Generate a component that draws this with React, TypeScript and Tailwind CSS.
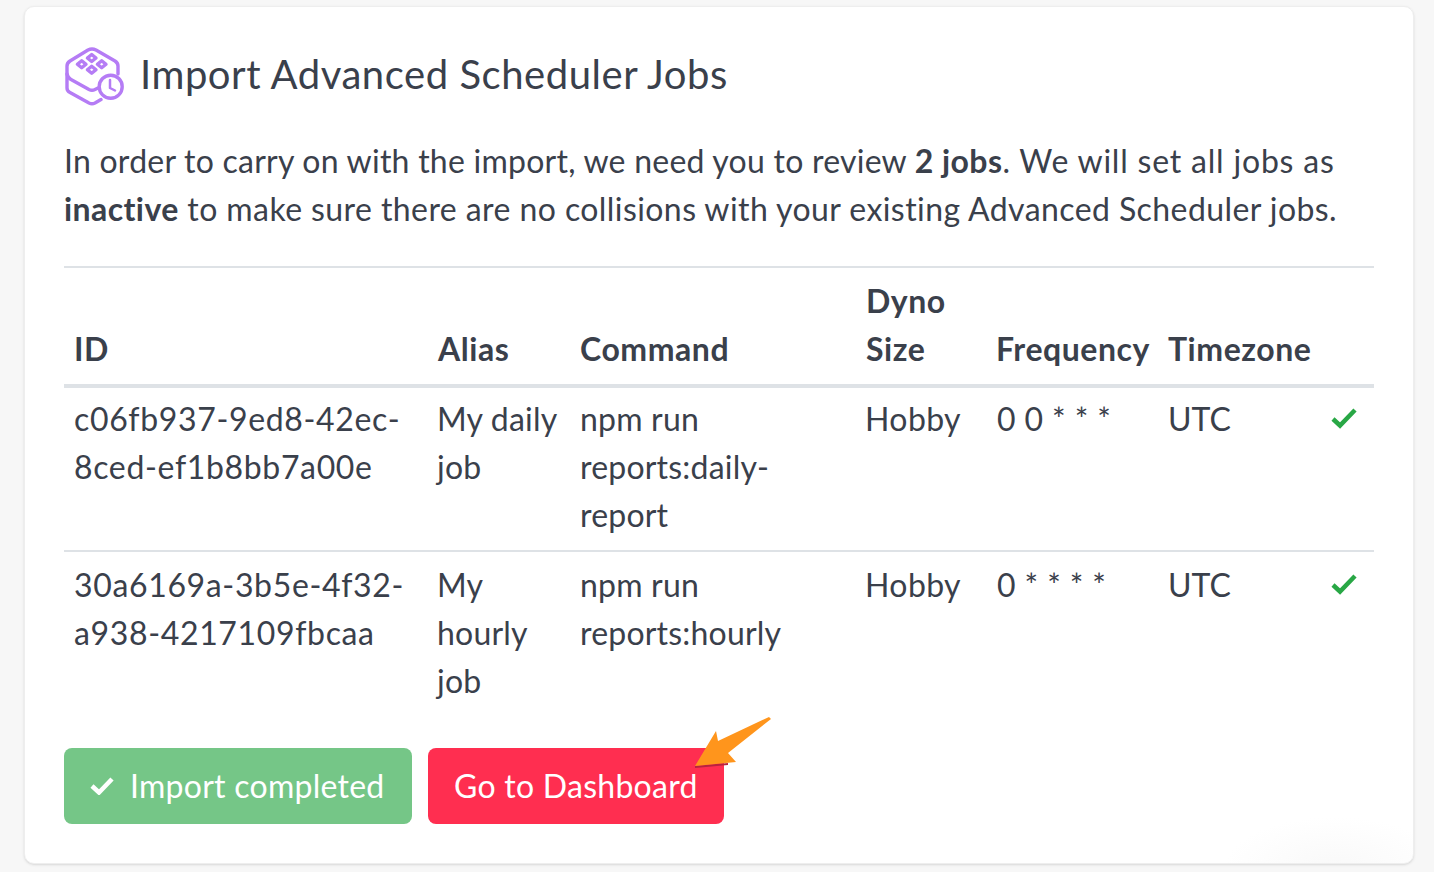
const font = "font-['Lato','Noto_Sans',sans-serif]";

type Job = {
  id: string[];
  alias: string[];
  command: string[];
  size: string;
  frequency: string;
  timezone: string;
};

const JOBS: Job[] = [
  {
    id: ["c06fb937-9ed8-42ec-", "8ced-ef1b8bb7a00e"],
    alias: ["My daily", "job"],
    command: ["npm run", "reports:daily-", "report"],
    size: "Hobby",
    frequency: "0 0 * * *",
    timezone: "UTC",
  },
  {
    id: ["30a6169a-3b5e-4f32-", "a938-4217109fbcaa"],
    alias: ["My", "hourly", "job"],
    command: ["npm run", "reports:hourly"],
    size: "Hobby",
    frequency: "0 * * * *",
    timezone: "UTC",
  },
];

function Logo() {
  return (
    <svg viewBox="64 46 60 60" className="w-[60px] h-[60px] shrink-0" fill="none" stroke="#b57cf5" strokeWidth="3.4" strokeLinejoin="round" strokeLinecap="round">
      <path d="M88 50 Q92 48 96 50 L115 61 Q118 63 118 66 L118 74 M67 66 Q67 63 70 61 L88 50 M67 66 L67 88 Q67 91 70 92.5 L89 103 Q92 104.5 95 103 L101 99.5" />
      <path d="M67 74 Q68 78 71 79.5 L89 89.5 Q92 91 95 89.5 L98 88" />
      <path d="M91.7 54.5 L96 58 L91.7 61.5 L87.4 58 Z" />
      <path d="M81.7 60.8 L86 64.3 L81.7 67.8 L77.4 64.3 Z" />
      <path d="M101.7 60.8 L106 64.3 L101.7 67.8 L97.4 64.3 Z" />
      <path d="M91.7 66.3 L96 69.8 L91.7 73.3 L87.4 69.8 Z" />
      <circle cx="110.7" cy="86.7" r="11.5" fill="#fff" />
      <path d="M110 80 L110 88 L115 90.5" strokeWidth="2.5" />
    </svg>
  );
}

function Check() {
  return (
    <svg viewBox="0 0 26 24" className="w-[26px] h-[24px]" fill="none" stroke="#28a745" strokeWidth="4.5">
      <path d="M2 12 L9 18.5 L24 3" />
    </svg>
  );
}

function Lines({ lines, className }: { lines: string[]; className?: string }) {
  return (
    <>
      {lines.map((line) => (
        <div key={line} className={`whitespace-nowrap ${className ?? ""}`}>
          {line}
        </div>
      ))}
    </>
  );
}

export default function App() {
  const td = "align-top pb-[11px] pl-[9px] pr-[10px]";
  const th = "align-bottom text-left font-bold tracking-[0.55px] pt-[9px] pb-[11px] pl-[9px] pr-[0px] border-b-4 border-[#dee2e6]";

  return (
    <div className={`${font} w-[1434px] h-[872px] overflow-hidden bg-[#f7f7f7] pt-[6px] pl-[24px] pr-[20px] text-[32px] leading-[48px] text-[#3a404b]`}>
      <div className="h-[858px] bg-white bg-[radial-gradient(ellipse_110px_50px_at_1310px_860px,#f9f9f9,#ffffff)] rounded-[10px] border border-[#eeeeee] shadow-sm pl-[39px] pr-[39px] pt-[37px]">
        <div className="flex items-center gap-[16px] h-[60px] relative">
          <div className="w-[60px] h-[60px] mt-[4px] shrink-0">
            <Logo />
          </div>
          <h1 className="text-[40px] leading-[48px] font-normal tracking-[0.55px]">Import Advanced Scheduler Jobs</h1>
        </div>
        <p className="mt-[33px] tracking-[0.42px]">
          <span className="tracking-[0.24px]">In order to carry on with the import, we need you to review </span>
          <b>2 jobs</b>
          <span className="tracking-[0.8px]">. We will set all jobs as</span>
          <br />
          <b>inactive</b> to make sure there are no collisions with your existing Advanced Scheduler jobs.
        </p>
        <table className="mt-[33px] w-[1310px] table-fixed border-collapse border-t-2 border-[#dee2e6]">
          <colgroup>
            <col className="w-[364px]" />
            <col className="w-[143px]" />
            <col className="w-[285px]" />
            <col className="w-[131px]" />
            <col className="w-[172px]" />
            <col className="w-[153px]" />
            <col className="w-[62px]" />
          </colgroup>
          <thead>
            <tr>
              <th className={`${th} pl-[10px]`}>ID</th>
              <th className={`${th} pl-[10px]`}>Alias</th>
              <th className={th}>Command</th>
              <th className={`${th} pl-[10px]`}>
                Dyno
                <br />
                Size
              </th>
              <th className={th}>Frequency</th>
              <th className={th}>Timezone</th>
              <th className={th}></th>
            </tr>
          </thead>
          <tbody>
            {JOBS.map((job, i) => (
              <tr key={job.id[0]} className={i > 0 ? "border-t-2 border-[#dee2e6]" : ""}>
                <td className={`${td} pl-[10px] ${i > 0 ? "pt-[9px]" : "pt-[7px]"}`}>
                  <Lines lines={job.id} className="tracking-[0.65px]" />
                </td>
                <td className={`${td} ${i > 0 ? "pt-[9px]" : "pt-[7px]"}`}>
                  <Lines lines={job.alias} className="tracking-[0.2px]" />
                </td>
                <td className={`${td} ${i > 0 ? "pt-[9px]" : "pt-[7px]"}`}>
                  <Lines lines={job.command} className="tracking-[0.2px]" />
                </td>
                <td className={`${td} ${i > 0 ? "pt-[9px]" : "pt-[7px]"} tracking-[0.4px]`}>{job.size}</td>
                <td className={`${td} pl-[10px] ${i > 0 ? "pt-[9px]" : "pt-[7px]"} tracking-[0.4px]`}>{job.frequency}</td>
                <td className={`${td} ${i > 0 ? "pt-[9px]" : "pt-[7px]"}`}>{job.timezone}</td>
                <td className={`${td} ${i > 0 ? "pt-[9px]" : "pt-[7px]"}`}>
                  <div className="h-[48px] flex items-center pl-[10px]">
                    <Check />
                  </div>
                </td>
              </tr>
            ))}
          </tbody>
        </table>
        <div className="mt-[32px] flex gap-[16px] tracking-[0.26px]">
          <button className="h-[76px] w-[348px] rounded-[8px] bg-[#75c687] text-white flex items-center pl-[26px] gap-[16px]">
            <svg viewBox="0 0 24 18" className="w-[24px] h-[18px]" fill="none" stroke="#fff" strokeWidth="4.5">
              <path d="M2 9 L9 15.5 L22 2" />
            </svg>
            Import completed
          </button>
          <div className="relative">
            <button className="h-[76px] w-[296px] rounded-[8px] bg-[#ff2e50] text-white text-left pl-[26px]">
              Go to Dashboard
            </button>
            <svg viewBox="690 712 84 58" className="absolute left-[262px] top-[-36px] w-[84px] h-[58px]">
              <path d="M695 768 L728 765 L728 763 L695 766 Z" fill="#b8233f" />
              <path d="M695 766 L716 731 L718 741 L769 717 L771 719 L728 753 L736 762 Z" fill="#ff951c" />
            </svg>
          </div>
        </div>
      </div>
    </div>
  );
}
